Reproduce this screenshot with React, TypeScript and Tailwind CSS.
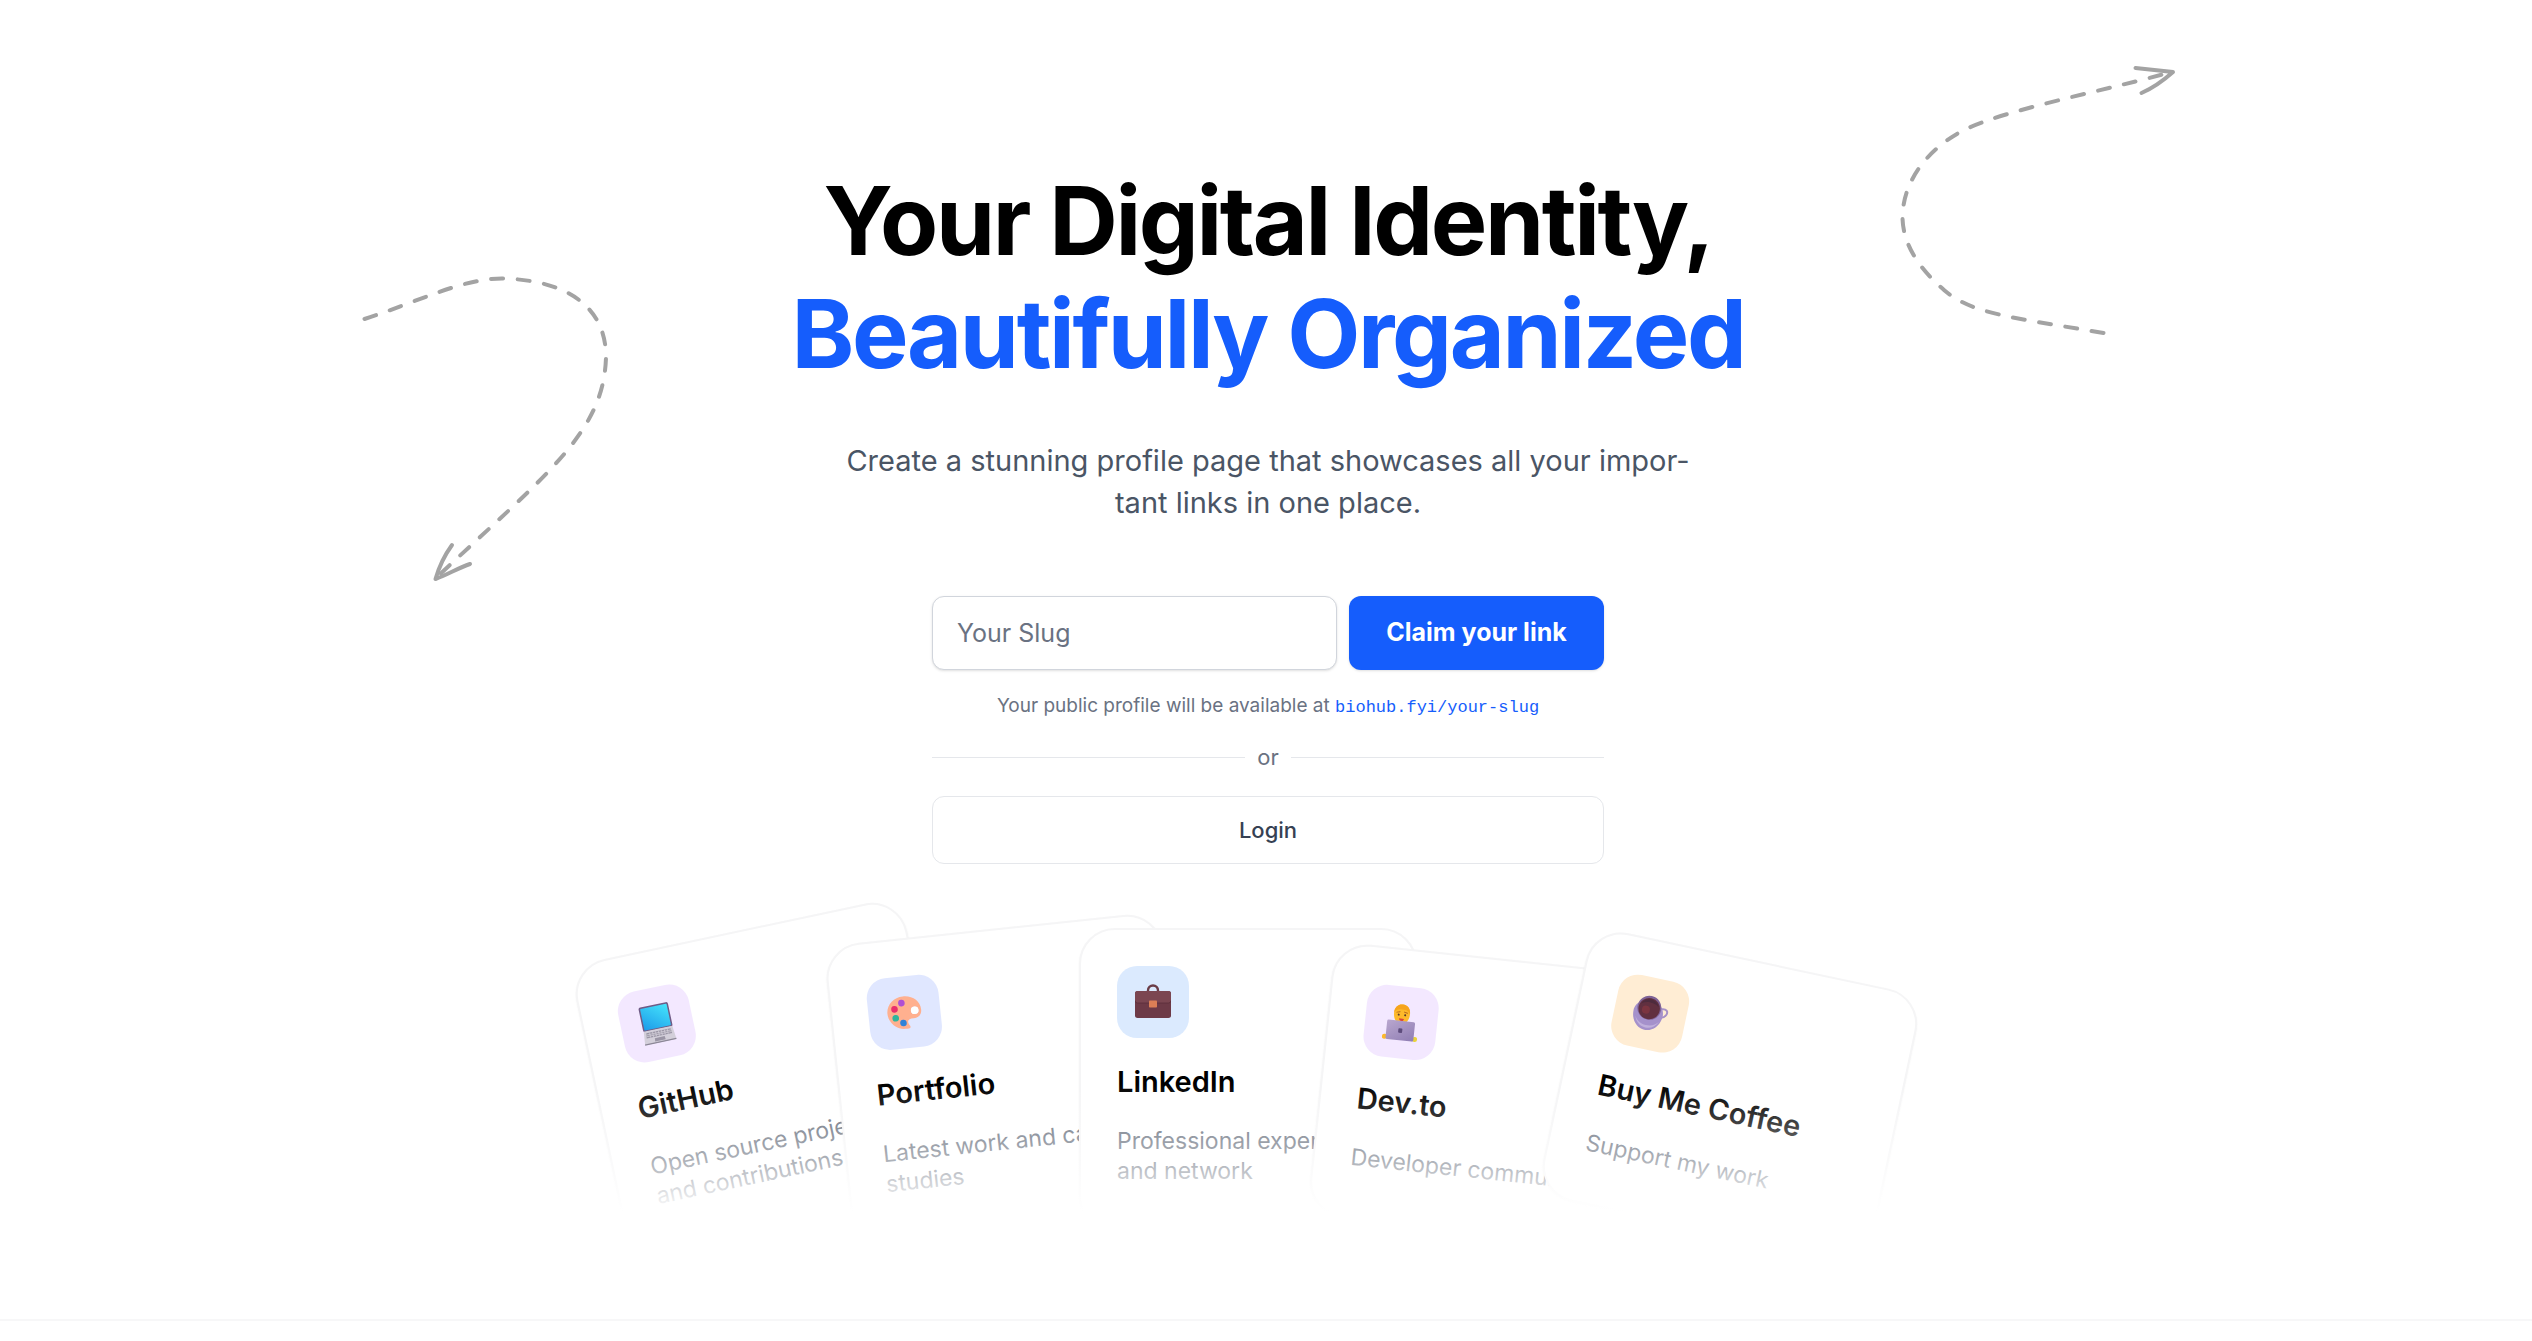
import React from 'react';

function Laptop() {
  return (
    <svg viewBox="0 0 36 40" className="h-10 w-9" aria-hidden="true">
      <defs>
        <linearGradient id="lap-screen" x1="1" y1="0" x2="0" y2="1">
          <stop offset="0" stopColor="#45e4fb" />
          <stop offset="1" stopColor="#1d9bea" />
        </linearGradient>
      </defs>
      <rect x="3" y="1" width="30" height="25" rx="2" fill="#6f5b86" />
      <rect x="4.5" y="2.5" width="27" height="22" rx="0.8" fill="url(#lap-screen)" />
      <path d="M3.4 25.5h29.2L34 39H2z" fill="#d3cfda" />
      <path d="M5.6 27.5h24.8l.6 5H5z" fill="#9a95a5" />
      <path d="M5.4 29.2h25.2M5.2 30.9h25.6M9 27.5v5M12 27.5v5M15 27.5v5M18 27.5v5M21 27.5v5M24 27.5v5M27 27.5v5" stroke="#d3cfda" strokeWidth="0.7" />
      <path d="M13 34h10l.4 3.4H12.6z" fill="#9a95a5" />
      <path d="M2 38h32v1.4H2z" fill="#8c8797" />
    </svg>
  );
}

function Palette() {
  return (
    <svg viewBox="0 0 36 36" className="size-9" aria-hidden="true">
      <path
        fillRule="evenodd"
        d="M18 2C8.500 2 1 9 1 17.800C1 26.500 8 34 17 34.500c3 .200 5.500.100 5.700-1.300.200-1.500-2.200-3-2-5.400.200-2.300 2.500-3.200 6-3 5 .200 8.300-3 8.300-8C35 8 27.500 2 18 2zM28.500 13.200a3.800 3.800 0 1 1 0 7.600 3.800 3.800 0 0 1 0-7.600z"
        fill="#ffb08f"
      />
      <circle cx="28.500" cy="17" r="3.800" fill="#ffffff" />
      <circle cx="16" cy="8.500" r="3.300" fill="#b04fd3" />
      <circle cx="8.500" cy="14" r="3.300" fill="#ea2f6c" />
      <circle cx="8.800" cy="23" r="3.300" fill="#2fb59c" />
      <circle cx="16" cy="28.500" r="3.300" fill="#2f82d8" />
    </svg>
  );
}

function Briefcase() {
  return (
    <svg viewBox="0 0 36 36" className="size-9" aria-hidden="true">
      <path d="M13 8V6.500a5 5 0 0 1 10 0V8" fill="none" stroke="#6b3d47" strokeWidth="2.400" />
      <rect x="0" y="7" width="36" height="27" rx="2.500" fill="#6d3a47" />
      <path d="M0 9.500A2.500 2.500 0 0 1 2.500 7h31A2.500 2.500 0 0 1 36 9.500v7a2.500 2.500 0 0 1-2.500 2.500h-31A2.500 2.500 0 0 1 0 16.500z" fill="#7b4651" />
      <path d="M0 16.500A2.500 2.500 0 0 0 2.500 19h31a2.500 2.500 0 0 0 2.500-2.500" fill="none" stroke="#5a2f3b" strokeWidth="0.800" />
      <rect x="14" y="16.500" width="8" height="7" rx="0.800" fill="#dc7f56" />
    </svg>
  );
}

function Technologist() {
  return (
    <svg viewBox="0 0 36 38" className="h-[38px] w-9" aria-hidden="true">
      <defs>
        <linearGradient id="tech-lid" x1="0" y1="0" x2="1" y2="1">
          <stop offset="0" stopColor="#b9a7cf" />
          <stop offset="1" stopColor="#8f7db3" />
        </linearGradient>
      </defs>
      <path d="M10 10c0-6 3.500-9 8-9s8 3 8 9c0 6-3 10.500-8 10.500S10 16 10 10z" fill="#fdb92a" />
      <path d="M10 10c0-6 3.500-9 8-9s8 3 8 9c-2-3.500-4-4-8-4s-6.500.500-8 4z" fill="#f6a41c" />
      <path d="M12.800 9.200l3-.8M20.300 8.400l3 .8" stroke="#b5651d" strokeWidth="1" strokeLinecap="round" />
      <circle cx="14.800" cy="11.500" r="1" fill="#5a3a2c" />
      <circle cx="21.300" cy="11.500" r="1" fill="#5a3a2c" />
      <path d="M15.500 15.200h5c-.3 1.800-1.300 2.500-2.500 2.500s-2.200-.7-2.500-2.500z" fill="#d9433b" />
      <circle cx="2.800" cy="34.500" r="2.500" fill="#fdb92a" />
      <circle cx="33.200" cy="34.500" r="2.500" fill="#e9d33a" />
      <rect x="4" y="17.500" width="28" height="19.500" rx="1.500" fill="url(#tech-lid)" />
      <rect x="16" y="25" width="4" height="4.500" rx="0.800" fill="#5d4c7c" />
    </svg>
  );
}

function Coffee() {
  return (
    <svg viewBox="0 0 36 36" className="size-9" aria-hidden="true">
      <path d="M28 11.500c5-2 7.500 1 6 4.500-1.200 2.800-4 4-7 4" fill="none" stroke="#a892c6" strokeWidth="2" />
      <path d="M1 18c0-4 2-8 5-9h21c3 3 4.500 7 3.500 12-1.300 8-7.500 14-15 14S1 28 1 18z" fill="#a591cb" />
      <path d="M4 23c2 6 6.500 9.500 12 9.500s10-3 12.500-8.500c-3 4-7 6-12.500 6S6.500 27.500 4 23z" fill="#c0b0dc" />
      <circle cx="16" cy="12.500" r="12" fill="#7f6396" />
      <circle cx="16" cy="13.300" r="10.700" fill="#613040" />
      <path d="M7 10c2-4.500 5-6 9-6s7 1.500 9 6c-2.500-2-5.500-3-9-3s-6.500 1-9 3z" fill="#4d2b3d" />
      <circle cx="13" cy="15" r="4" fill="#7b3440" />
    </svg>
  );
}

const CARDS = [
  { title: 'GitHub', lines: ['Open source projects', 'and contributions'], tilt: '-rotate-12', tint: 'bg-purple-100', Icon: Laptop },
  { title: 'Portfolio', lines: ['Latest work and case', 'studies'], tilt: '-rotate-6', tint: 'bg-indigo-100', Icon: Palette },
  { title: 'LinkedIn', lines: ['Professional experience', 'and network'], tilt: 'rotate-0', tint: 'bg-blue-100', Icon: Briefcase },
  { title: 'Dev.to', lines: ['Developer community'], tilt: 'rotate-6', tint: 'bg-purple-100', Icon: Technologist },
  { title: 'Buy Me Coffee', lines: ['Support my work'], tilt: 'rotate-12', tint: 'bg-[#ffedd4]', Icon: Coffee },
];

function LeftArrow() {
  return (
    <svg
      viewBox="340 250 300 350"
      className="absolute top-[250px] left-[340px] h-[350px] w-[300px]"
      fill="none"
      stroke="#a3a3a3"
      strokeWidth="4"
      strokeLinecap="round"
      aria-hidden="true"
    >
      <path d="M364.500 319C420 301 462 278.500 502 278.500C570 280 606 309 606 357C604 432 548 473 437 577" strokeDasharray="12 14.600" />
      <path d="M452 545C444 556 439 567 435.500 579C447 575 458 568 470 564" strokeLinejoin="round" />
    </svg>
  );
}

function RightArrow() {
  return (
    <svg
      viewBox="1870 40 330 320"
      className="absolute top-10 right-[332px] h-80 w-[330px]"
      fill="none"
      stroke="#a3a3a3"
      strokeWidth="4"
      strokeLinecap="round"
      aria-hidden="true"
    >
      <path d="M2103.500 333C2010 317 1972 314 1944 290C1915 265 1902 240 1902.500 215C1904 180 1928 148 1966 129C2010 109 2090 94 2170 72.500" strokeDasharray="12 14.600" />
      <path d="M2135.500 68L2173 72C2164 80 2153 88 2141.500 93" strokeLinejoin="round" />
    </svg>
  );
}

export default function App() {
  return (
    <main className="min-h-screen overflow-hidden bg-white font-['Inter',sans-serif]">
      <section className="relative flex flex-col items-center border-b-2 border-[#f7f7f8] pt-[164px] pb-[107px] pl-1">
        <LeftArrow />
        <RightArrow />
        <h1 className="text-center text-[95px] leading-[113px] font-bold tracking-tight text-black">
          Your Digital Identity,
          <span className="block text-[#155dfc]">Beautifully Organized</span>
        </h1>
        <p className="mt-[50px] text-center text-[29px] leading-[42px] text-[#4a5565]">
          Create a stunning profile page that showcases all your impor-
          <br />
          tant links in one place.
        </p>

        <div className="mt-18 w-full max-w-[672px]">
          <form className="flex gap-3" onSubmit={(e) => e.preventDefault()}>
            <input
              type="text"
              aria-label="Your Slug"
              placeholder="Your Slug"
              className="h-[74px] min-w-0 flex-1 rounded-xl border border-[#d1d5dc] bg-white px-6 text-[25px] text-gray-900 shadow-sm placeholder:text-[#6a7282]"
            />
            <button type="submit" className="h-[74px] w-[255px] rounded-xl bg-[#155dfc] text-[25px] font-bold text-white shadow-sm">
              Claim your link
            </button>
          </form>
          <p className="mt-6 h-6 text-center text-[19px] leading-6 text-[#6a7282]">
            Your public profile will be available at{' '}
            <span className="font-['Liberation_Mono',monospace] text-[17px] leading-none text-[#155dfc]">biohub.fyi/your-slug</span>
          </p>
          <div className="my-5 flex h-[38px] items-center gap-3 text-[22px] text-[#6a7282]">
            <span className="h-px flex-1 bg-gray-200" />
            or
            <span className="h-px flex-1 bg-gray-200" />
          </div>
          <button type="button" className="h-[68px] w-full rounded-xl border border-gray-200 bg-white text-[22px] font-medium text-[#364153]">
            Login
          </button>
        </div>

        <div className="relative h-[348px] w-full overflow-hidden pt-16 pr-10">
          <div className="flex items-end justify-center pl-[97px]">
            {CARDS.map(({ title, lines, tilt, tint, Icon }) => (
              <article
                key={title}
                className={`-ml-[97px] w-[338px] shrink-0 rounded-[36px] border-2 border-[#f5f5f6] bg-white p-9 pb-11 shadow-xs ${tilt}`}
              >
                <div className={`flex size-18 items-center justify-center rounded-[20px] ${tint}`}>
                  <Icon />
                </div>
                <h2 className="mt-6 text-[29px] leading-10 font-semibold whitespace-nowrap text-black">{title}</h2>
                <p className="mt-6 text-[23px] leading-[30px] whitespace-nowrap text-[#5d6674]">
                  {lines.map((line) => (
                    <span key={line} className="block">
                      {line}
                    </span>
                  ))}
                </p>
              </article>
            ))}
          </div>
          <div className="pointer-events-none absolute inset-x-0 bottom-0 h-32 bg-linear-to-b from-transparent via-white/50 via-60% to-white" />
        </div>
      </section>
    </main>
  );
}
